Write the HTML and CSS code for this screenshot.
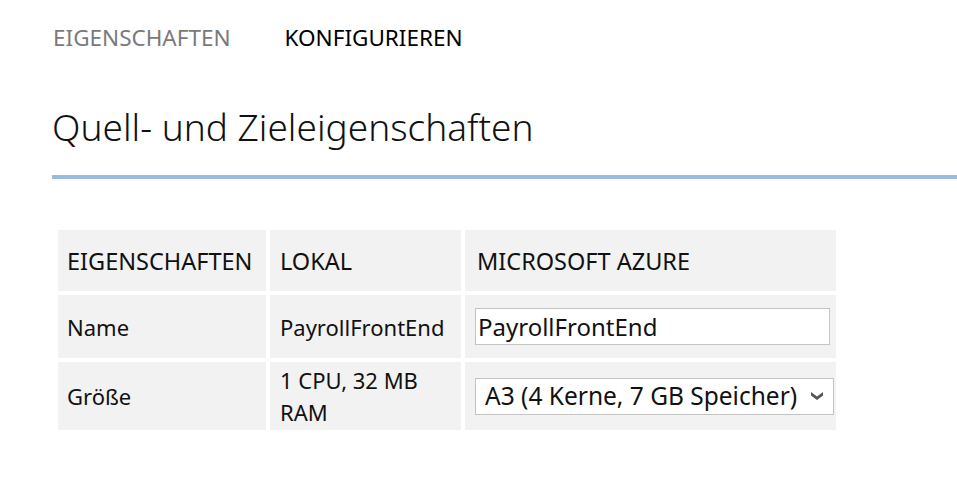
FILE: index.html
```html
<!DOCTYPE html>
<html lang="de">
<head>
<meta charset="utf-8">
<title>Quell- und Zieleigenschaften</title>
<link rel="stylesheet" href="styles.css">
</head>
<body>
<nav class="tabs">
  <span class="tab">EIGENSCHAFTEN</span>
  <span class="tab active">KONFIGURIEREN</span>
</nav>
<h1 class="title">Quell- und Zieleigenschaften</h1>
<div class="rule"></div>
<table class="props">
  <tr class="head">
    <td class="c1">EIGENSCHAFTEN</td>
    <td class="c2">LOKAL</td>
    <td class="c3">MICROSOFT AZURE</td>
  </tr>
  <tr class="r-name">
    <td class="c1">Name</td>
    <td class="c2">PayrollFrontEnd</td>
    <td class="c3"><input class="field" type="text" value="PayrollFrontEnd"></td>
  </tr>
  <tr class="r-size">
    <td class="c1">Größe</td>
    <td class="c2">1 CPU, 32 MB RAM</td>
    <td class="c3">
      <div class="select">
        <span>A3 (4 Kerne, 7 GB Speicher)</span>
        <svg class="chev" width="12" height="8" viewBox="0 0 12 8"><path d="M0 0 L6 4.5 L12 0 L12 3.5 L6 8 L0 3.5 Z" fill="#555"/></svg>
      </div>
    </td>
  </tr>
</table>
</body>
</html>
```

FILE: styles.css
```css
html, body {
  margin: 0;
  padding: 0;
  background: #fff;
}
body {
  font-family: "Noto Sans", "Open Sans", sans-serif;
  color: #111;
  width: 957px;
  overflow: hidden;
}
.tabs {
  display: flex;
  gap: 54px;
  padding: 20px 0 0 53px;
  height: 34px;
  align-items: center;
}
.tab {
  font-size: 22.5px;
  color: #7a7a7a;
}
.tab.active {
  color: #000;
}
.title {
  margin: 49px 0 0 52px;
  font-size: 37px;
  font-weight: 300;
  line-height: 48px;
  color: #111;
}
.rule {
  margin: 24px 0 0 52px;
  height: 4px;
  background: #98bade;
}
.props {
  margin: 47px 0 0 54px;
  border-spacing: 4px;
  font-size: 22px;
  color: #111;
}
.props td {
  background: #f2f2f2;
  padding: 0 10px;
  vertical-align: middle;
  line-height: 32px;
}
.props .c1 { width: 189px; padding-left: 9px; }
.props .c2 { width: 171px; }
.props .c3 { width: 361px; padding-right: 0; }
.props .head td { font-size: 23.5px; }
.props .head .c3 { padding-left: 12px; width: 359px; }
.head td { height: 61px; }
.r-name td { height: 63px; }
.r-size td { height: 68px; }
.field {
  box-sizing: border-box;
  width: 355px;
  height: 37px;
  border: 1px solid #c4c4c4;
  padding: 0 2px;
  font: inherit;
  font-size: 24px;
  color: #111;
  background: #fff;
  display: block;
}
.select {
  box-sizing: border-box;
  width: 359px;
  height: 37px;
  border: 1px solid #c4c4c4;
  background: #fff;
  display: flex;
  align-items: center;
  justify-content: space-between;
  padding: 0 10px 0 9px;
  font-size: 24.5px;
  white-space: nowrap;
}
.chev { flex: none; }
```
